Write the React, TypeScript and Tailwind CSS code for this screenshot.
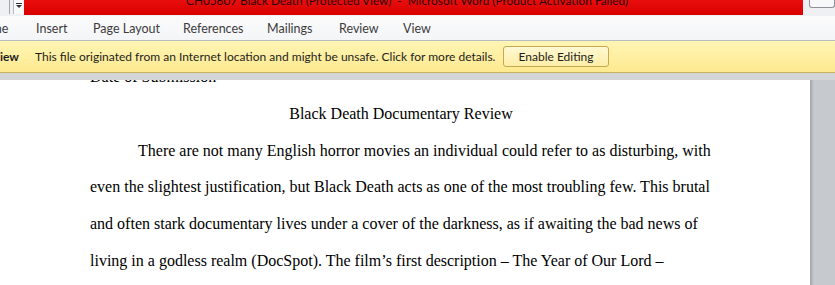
const tabs = [
  { label: "Home", w: "w-[61px] -ml-[25px]" },
  { label: "Insert", w: "w-[57px]" },
  { label: "Page Layout", w: "w-[90px]" },
  { label: "References", w: "w-[84px]" },
  { label: "Mailings", w: "w-[72px]" },
  { label: "Review", w: "w-[64px]" },
  { label: "View", w: "w-[60px]" },
];

const lines = [
  "even the slightest justification, but Black Death acts as one of the most troubling few. This brutal",
  "and often stark documentary lives under a cover of the darkness, as if awaiting the bad news of",
  "living in a godless realm (DocSpot). The film\u2019s first description \u2013 The Year of Our Lord \u2013",
];

const ui = { fontFamily: 'Lato, "Noto Sans", Arial, sans-serif' };
const serif = { fontFamily: '"Liberation Serif", "Times New Roman", serif' };

const App = () => {
  return (
    <div className="w-[835px] h-[285px] overflow-hidden bg-white flex flex-col" style={ui}>
      {/* title bar */}
      <div className="h-[16px] flex bg-[#eef0f3] shrink-0">
        <div className="w-[24px] flex items-start">
          <div className="w-[1px] h-[14px] bg-[#a3a8ae] ml-[9px]"></div>
          <div className="ml-[3px] w-[10px] h-[14px] bg-[#f8f9fb] border-l border-[#b8bcc2] flex flex-col items-center pt-[3px]">
            <div className="w-[6px] h-[1px] bg-[#333]"></div>
            <div className="mt-[1px] w-0 h-0 border-l-[3px] border-r-[3px] border-t-[3px] border-l-transparent border-r-transparent border-t-[#333]"></div>
          </div>
        </div>
        <div className="w-[779px] h-[15px] bg-gradient-to-b from-[#e80e0e] to-[#d90000] overflow-hidden">
          <div className="-mt-[7px] pl-[162px] text-[11.8px] leading-[16px] text-[#2a0606] whitespace-pre">
            CH05607 Black Death (Protected View)  -  Microsoft Word (Product Activation Failed)
          </div>
        </div>
        <div className="flex-1 flex justify-end items-start">
          <div className="w-[26px] h-[8px] border border-t-0 border-[#8d9299] rounded-b-[3px] bg-[#f7f8fa]"></div>
        </div>
      </div>

      {/* ribbon tabs */}
      <div className="h-[25px] shrink-0 flex items-center overflow-hidden bg-gradient-to-b from-[#fbfbfc] to-[#f4f5f7] border-b border-[#b9bdc3]">
        {tabs.map((t) => (
          <div key={t.label} className={`${t.w} shrink-0 text-[12.5px] text-[#3c3c3c] whitespace-nowrap pt-[2px]`}>
            {t.label}
          </div>
        ))}
      </div>

      {/* protected view bar */}
      <div className="h-[32px] shrink-0 flex items-center bg-gradient-to-b from-[#fff5b4] to-[#fde98f] border-b border-[#c9b25c] text-[12px] text-[#1e1e1e]">
        <div className="w-[19px] shrink-0 overflow-hidden flex justify-end">
          <span className="font-bold whitespace-nowrap">Protected View</span>
        </div>
        <div className="ml-[16px] w-[468px] shrink-0 whitespace-nowrap">
          This file originated from an Internet location and might be unsafe. Click for more details.
        </div>
        <div className="w-[106px] h-[21px] shrink-0 flex items-center justify-center rounded-[3px] border border-[#c4a955] bg-gradient-to-b from-[#fff8d2] to-[#fdeea6]">
          Enable Editing
        </div>
      </div>

      <div className="h-[7px] shrink-0 bg-[#d3d5d9]"></div>

      {/* document */}
      <div className="flex-1 flex overflow-hidden">
        <div className="w-[810px] bg-white overflow-hidden">
          <div className="-mt-[21px] pl-[90px] text-[16px] leading-[36.8px] text-black whitespace-nowrap" style={serif}>
            <div>Date of Submission</div>
            <div className="w-[622px] text-center">Black Death Documentary Review</div>
            <div className="pl-[48px]">
              There are not many English horror movies an individual could refer to as disturbing, with
            </div>
            {lines.map((l) => (
              <div key={l}>{l}</div>
            ))}
          </div>
        </div>
        <div className="flex-1 bg-gradient-to-r from-[#a2a6ac] via-[#c6c9ce] to-[#c6c9ce] bg-[length:8px_100%] bg-no-repeat bg-[#c6c9ce]"></div>
      </div>
    </div>
  );
};

export default App;
